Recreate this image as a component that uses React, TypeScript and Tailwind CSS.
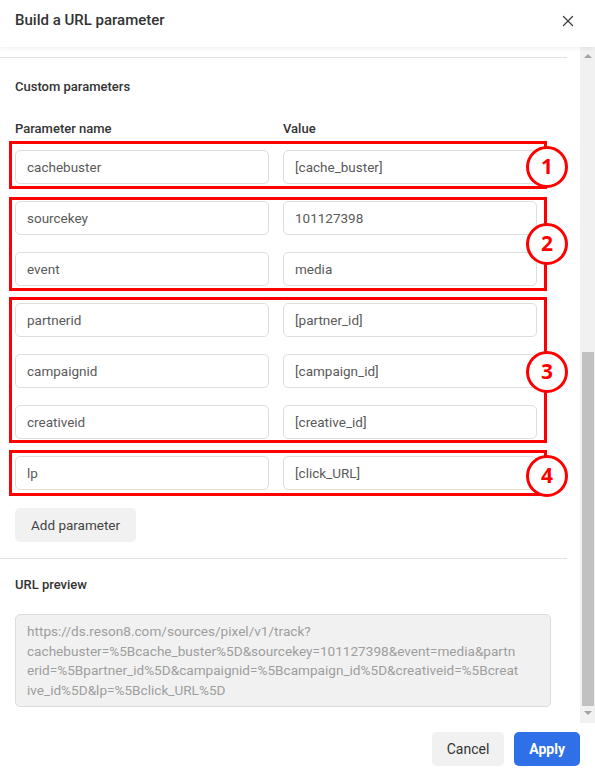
import { X } from "lucide-react";

type Param = { name: string; value: string };

const params: Param[] = [
  { name: "cachebuster", value: "[cache_buster]" },
  { name: "sourcekey", value: "101127398" },
  { name: "event", value: "media" },
  { name: "partnerid", value: "[partner_id]" },
  { name: "campaignid", value: "[campaign_id]" },
  { name: "creativeid", value: "[creative_id]" },
  { name: "lp", value: "[click_URL]" },
];

// annotation boxes drawn over the rows (coords relative to the scroll column)
const marks = [
  { n: "1", box: "top-[94px] h-[48px]", circle: "top-[99px]" },
  { n: "2", box: "top-[150px] h-[94px]", circle: "top-[176px]" },
  { n: "3", box: "top-[250px] h-[146px]", circle: "top-[304px]" },
  { n: "4", box: "top-[403px] h-[46px]", circle: "top-[408px]" },
];

const previewUrl =
  "https://ds.reson8.com/sources/pixel/v1/track?cachebuster=%5Bcache_buster%5D&sourcekey=101127398&event=media&partnerid=%5Bpartner_id%5D&campaignid=%5Bcampaign_id%5D&creativeid=%5Bcreative_id%5D&lp=%5Bclick_URL%5D";

function Field({ text }: { text: string }) {
  return (
    <div className="h-[34px] w-[254px] rounded-[5px] border border-[#dedede] bg-white px-[11px] flex items-center text-[13.5px] text-[#5a5a5a]">
      {text}
    </div>
  );
}

export default function App() {
  return (
    <div
      className="w-[595px] h-[769px] bg-white flex flex-col overflow-hidden"
      style={{ fontFamily: "Roboto, 'Noto Sans', sans-serif" }}
    >
      <div className="relative z-10 h-[47px] shrink-0 flex items-center justify-between pl-[15px] pr-[18px] pb-[6px] shadow-[0_2px_4px_rgba(0,0,0,0.06)]">
        <h1 className="text-[15px] font-medium text-[#333]">Build a URL parameter</h1>
        <X size={18} strokeWidth={1.8} className="text-[#444]" />
      </div>

      <div className="h-[676px] shrink-0 flex">
        <div className="relative w-[580px] pt-[10px]">
          <div className="w-[567px] border-t border-[#e2e2e2]" />

          <div className="pl-[15px]">
            <h2 className="mt-[20px] text-[13px] leading-[17px] font-medium text-[#333]">
              Custom parameters
            </h2>

            <div className="mt-[25px] flex gap-[14px] text-[13px] leading-[17px] font-medium text-[#333]">
              <span className="w-[254px]">Parameter name</span>
              <span>Value</span>
            </div>

            <div className="mt-[13px] flex flex-col gap-[17px]">
              {params.map((p) => (
                <div key={p.name} className="flex gap-[14px]">
                  <Field text={p.name} />
                  <Field text={p.value} />
                </div>
              ))}
            </div>

            <button className="mt-[18px] h-[34px] px-[16px] rounded-[5px] bg-[#f1f1f1] text-[13.5px] text-[#444]">
              Add parameter
            </button>
          </div>

          <div className="mt-[16px] w-[567px] border-t border-[#e2e2e2]" />

          <div className="pl-[15px]">
            <h2 className="mt-[17px] text-[13px] leading-[17px] font-medium text-[#333]">
              URL preview
            </h2>
            <div className="mt-[21px] w-[536px] h-[93px] rounded-[5px] border border-[#dcdcdc] bg-[#f1f1f1] pl-[11px] pr-[30px] pt-[7px] text-[13.6px] leading-[19.5px] text-[#9e9e9e] break-all">
              https://ds.reson8.com/sources/pixel/v1/track?
              <br />
              {previewUrl.slice(previewUrl.indexOf("?") + 1)}
            </div>
          </div>

          {marks.map((m) => (
            <div key={m.n}>
              <div className={`absolute left-[9px] w-[538px] border-[3px] border-[#ff0000] ${m.box}`} />
              <div
                className={`absolute left-[526px] w-[42px] h-[42px] rounded-full border-[3px] border-[#ff0000] bg-white flex items-center justify-center text-[21px] font-bold text-[#ff0000] ${m.circle}`}
                style={{ fontFamily: "'Open Sans', sans-serif" }}
              >
                {m.n}
              </div>
            </div>
          ))}
        </div>

        <div className="w-[15px] bg-[#f1f1f1] flex flex-col items-center">
          <div className="mt-[7px] h-0 w-0 border-x-[4px] border-x-transparent border-b-[4px] border-b-[#a3a3a3]" />
          <div className="mt-[294px] w-[12px] h-[354px] bg-[#c1c1c1]" />
          <div className="mt-[5px] h-0 w-0 border-x-[4px] border-x-transparent border-t-[4px] border-t-[#a3a3a3]" />
        </div>
      </div>

      <div className="flex-1 flex items-start justify-end gap-[10px] pt-[9px] pr-[15px]">
        <button className="h-[34px] px-[15px] rounded-[5px] bg-[#f1f1f1] text-[14px] text-[#333]">
          Cancel
        </button>
        <button className="h-[34px] px-[15px] rounded-[5px] bg-[#2f6fe8] text-[14px] font-bold text-white">
          Apply
        </button>
      </div>
    </div>
  );
}
